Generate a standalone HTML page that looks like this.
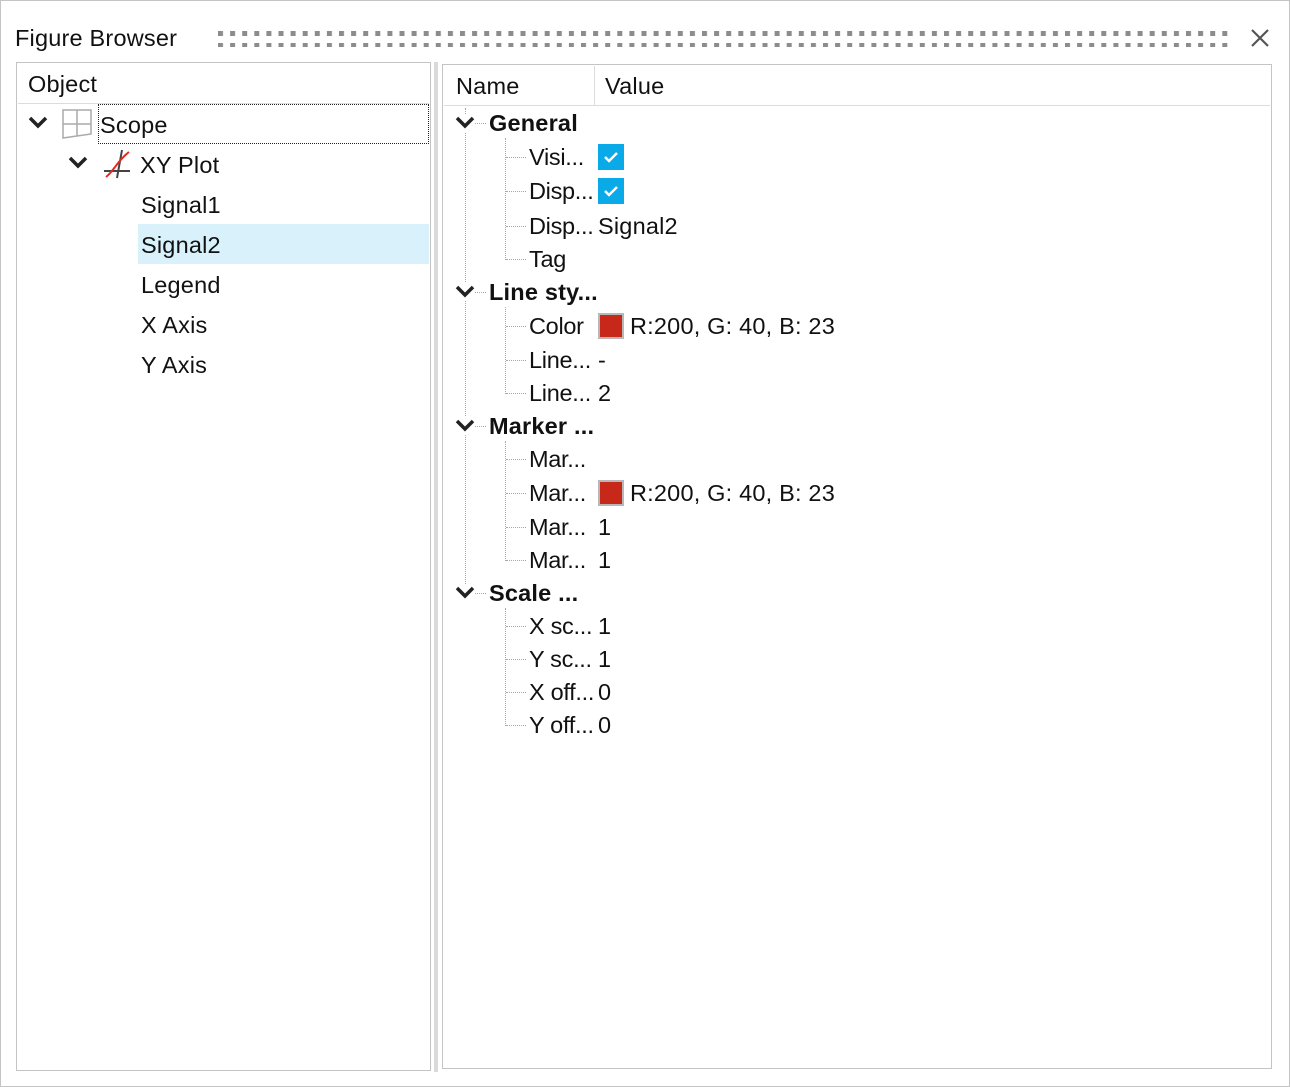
<!DOCTYPE html>
<html><head><meta charset="utf-8"><style>
*{margin:0;padding:0;box-sizing:border-box}
body{width:1290px;height:1087px;background:#fff;position:relative;overflow:hidden;font-family:"Liberation Sans",Arial,sans-serif;font-size:23.5px;color:#111;letter-spacing:0.2px}
.a{position:absolute}
.t{position:absolute;height:28px;line-height:28px;white-space:nowrap}
.n{overflow:hidden;width:68px}
.b{font-weight:bold}
.vl{position:absolute;width:0;border-left:1px dotted #a8a8a8}
.hl{position:absolute;height:0;border-top:1px dotted #a8a8a8}
.cb{position:absolute;width:26px;height:26px;background:#0aa9e8}
.sw{position:absolute;width:26px;height:26px;background:#c8281a;border:2px solid #b8b8b8}
</style></head><body>
<div class="a" style="left:0;top:0;width:1290px;height:1087px;border:1px solid #c4c4c4"></div>
<div class="t" style="left:15px;top:24px">Figure Browser</div>
<svg class="a" style="left:218px;top:30px" width="1016" height="17">
<defs><pattern id="d" width="12.1" height="12" patternUnits="userSpaceOnUse"><rect x="0" y="1" width="5" height="5" fill="#8c8c8c"/></pattern></defs>
<rect x="0" y="0" width="1016" height="18" fill="url(#d)"/></svg>
<svg class="a" style="left:1249px;top:27px" width="22" height="22"><path d="M3 3L19 19M19 3L3 19" stroke="#555" stroke-width="2.2"/></svg>

<div class="a" style="left:16px;top:62px;width:415px;height:1009px;border:1px solid #c4c4c4"></div>
<div class="a" style="left:18px;top:103px;width:411px;height:1px;background:#dcdcdc"></div>
<div class="t" style="left:28px;top:70px">Object</div>
<div class="a" style="left:98px;top:104px;width:331px;height:40px;border:1px dotted #222"></div>
<svg class="a" style="left:28px;top:114px" width="22" height="18"><path d="M2 4L10 12L18 4" fill="none" stroke="#222" stroke-width="3.5"/></svg>
<svg class="a" style="left:60px;top:107px" width="34" height="34"><path d="M3 3H31V27L3 31Z M17 3V29 M3 17H31" fill="none" stroke="#aaa" stroke-width="1.5"/></svg>
<div class="t" style="left:100px;top:111px">Scope</div>
<svg class="a" style="left:68px;top:154px" width="22" height="18"><path d="M2 4L10 12L18 4" fill="none" stroke="#222" stroke-width="3.5"/></svg>
<svg class="a" style="left:100px;top:147px" width="34" height="34"><path d="M4 24H30 M22 3L17 31" stroke="#444" stroke-width="2" fill="none"/><path d="M6 30C14 24 17 14 29 5" stroke="#e8281e" stroke-width="2" fill="none"/></svg>
<div class="t" style="left:140px;top:151px">XY Plot</div>
<div class="t" style="left:141px;top:191px">Signal1</div>
<div class="a" style="left:138px;top:224px;width:291px;height:40px;background:#d9f1fb"></div>
<div class="t" style="left:141px;top:231px">Signal2</div>
<div class="t" style="left:141px;top:271px">Legend</div>
<div class="t" style="left:141px;top:311px">X Axis</div>
<div class="t" style="left:141px;top:351px">Y Axis</div>

<div class="a" style="left:434px;top:62px;width:4px;height:1010px;background:#dadada"></div>

<div class="a" style="left:442px;top:64px;width:830px;height:1005px;border:1px solid #c4c4c4"></div>
<div class="a" style="left:444px;top:105px;width:826px;height:1px;background:#dcdcdc"></div>
<div class="a" style="left:594px;top:66px;width:1px;height:39px;background:#dcdcdc"></div>
<div class="t" style="left:456px;top:72px">Name</div>
<div class="t" style="left:605px;top:72px">Value</div>

<div class="vl" style="left:465px;top:108px;height:486px"></div>
<div class="vl" style="left:505px;top:138px;height:122px"></div>
<div class="vl" style="left:505px;top:307px;height:87px"></div>
<div class="vl" style="left:505px;top:441px;height:120px"></div>
<div class="vl" style="left:505px;top:608px;height:118px"></div>

<div id="r"></div>
<script>
const cats=[[123,"General"],[292,"Line sty..."],[426,"Marker ..."],[593,"Scale ..."]];
const kids=[[157,"Visi...","cb"],[191,"Disp...","cb"],[226,"Disp...","Signal2"],[259,"Tag",""],
[326,"Color","sw"],[360,"Line...","-"],[393,"Line...","2"],
[459,"Mar...",""],[493,"Mar...","sw"],[527,"Mar...","1"],[560,"Mar...","1"],
[626,"X sc...","1"],[659,"Y sc...","1"],[692,"X off...","0"],[725,"Y off...","0"]];
let h="";
for(const[y,t]of cats){
h+=`<div class="hl" style="left:466px;top:${y}px;width:20px"></div>`;
h+=`<svg class="a" style="left:455px;top:${y-9}px" width="20" height="18"><rect width="20" height="18" fill="#fff"/><path d="M2 4L10 12L18 4" fill="none" stroke="#222" stroke-width="3.5"/></svg>`;
h+=`<div class="t b" style="left:489px;top:${y-14}px">${t}</div>`;}
for(const[y,t,v]of kids){
h+=`<div class="hl" style="left:506px;top:${y}px;width:20px"></div>`;
h+=`<div class="t n" style="left:529px;top:${y-14}px;letter-spacing:-0.3px">${t}</div>`;
if(v=="cb")h+=`<div class="cb" style="left:598px;top:${y-13}px"><svg width="26" height="26"><path d="M7 13L11 17L19 9" fill="none" stroke="#fff" stroke-width="2.5"/></svg></div>`;
else if(v=="sw")h+=`<div class="sw" style="left:598px;top:${y-13}px"></div><div class="t" style="left:630px;top:${y-14}px">R:200, G: 40, B: 23</div>`;
else if(v)h+=`<div class="t" style="left:598px;top:${y-14}px">${v}</div>`;}
document.getElementById("r").innerHTML=h;
</script>
</body></html>
